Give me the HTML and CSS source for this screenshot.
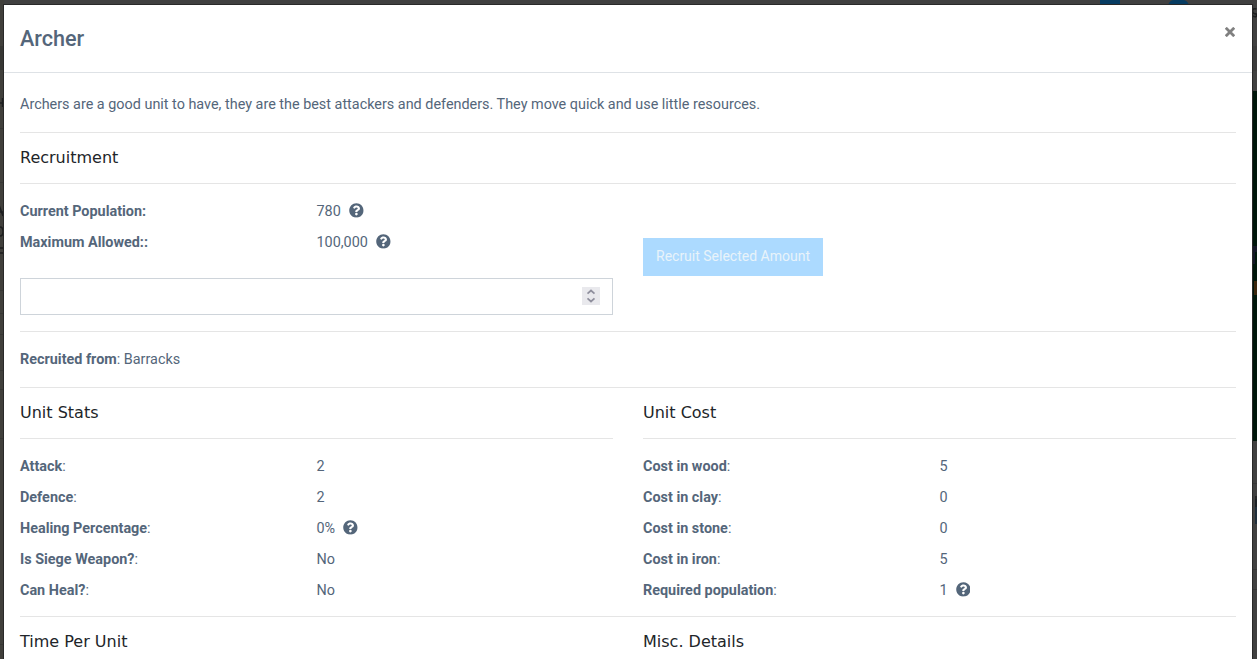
FILE: index.html
```html
<!DOCTYPE html>
<html lang="en">
<head>
<meta charset="utf-8">
<title>Archer</title>
<link rel="stylesheet" href="styles.css">
</head>
<body>
<svg width="0" height="0" class="sprite" aria-hidden="true">
  <symbol id="help" viewBox="0 0 512 512"><path fill="currentColor" d="M504 256c0 136.997-111.043 248-248 248S8 392.997 8 256C8 119.083 119.043 8 256 8s248 111.083 248 248zM262.655 90c-54.497 0-89.255 22.957-116.549 63.758-3.536 5.286-2.353 12.415 2.715 16.258l34.699 26.31c5.205 3.947 12.621 3.008 16.665-2.122 17.864-22.658 30.113-35.797 57.303-35.797 20.429 0 45.698 13.148 45.698 32.958 0 14.976-12.363 22.667-32.534 33.976C247.128 238.528 216 254.941 216 296v4c0 6.627 5.373 12 12 12h56c6.627 0 12-5.373 12-12v-1.333c0-28.462 83.186-29.647 83.186-106.667 0-58.002-60.165-102-116.531-102zM256 338c-25.365 0-46 20.635-46 46 0 25.364 20.635 46 46 46s46-20.636 46-46c0-25.364-20.635-46-46-46z"/></symbol>
</svg>
<div class="backdrop" aria-hidden="true">
  <svg class="backdrop-art" width="1257" height="659">
    <rect width="4" height="659" fill="#403f3b"/>
    <g fill="#373734"><rect y="46" width="4" height="24"/><rect y="128" width="4" height="1"/><rect y="182" width="4" height="1"/><rect y="290" width="4" height="1"/><rect y="313" width="4" height="1"/><rect y="334" width="4" height="1"/><rect y="370" width="4" height="1"/><rect y="389" width="4" height="1"/><rect y="438" width="4" height="1"/><rect y="644" width="4" height="1"/></g>
    <path fill="#073c62" d="M1100 0h20v5h-20zM1168 5q2-5 6-5h9q4 0 6 5z"/>
    <rect x="1252" y="46" width="5" height="25" fill="#3b3b3b"/>
    <rect x="1252" y="91" width="5" height="350" fill="#00170b"/>
    <path fill="#151827" d="M1253 264v-18h4v6h-2v12z"/>
    <path fill="#3b270d" d="M1254 281h3v14h-3z"/>
    <path fill="#1f2e3b" d="M1255 499h2v25h-2z"/>
    <g fill="#363636"><rect x="1252" y="483" width="5" height="1"/><rect x="1252" y="569" width="5" height="1"/><rect x="1252" y="589" width="5" height="1"/></g>
    <g fill="none" stroke="#1c1e1f" stroke-width="1.5"><path d="M1256.5 9q-4-1-4 2t4 3q1 4-4 2"/><path d="M2.5 107v-9M0 103h3M-1 205l4 11M0 212h3M0 227q3 0 3 4.500t-3 4.500M0 248h4M0 253h3M1256 496v11"/></g>
  </svg>
</div>
<main class="modal">
  <header class="modal-header">
    <h1 class="title">Archer</h1>
    <button class="close" aria-label="Close"><svg width="10" height="10" viewBox="0 0 10 10"><path d="M.8.8l8.400 8.400M9.200.8L.8 9.200"/></svg></button>
  </header>
  <div class="modal-body">
    <p class="intro">Archers are a good unit to have, they are the best attackers and defenders. They move quick and use little resources.</p>
    <h2 class="heading">Recruitment</h2>
    <section class="columns recruit">
      <div>
        <dl class="stats">
          <dt><b>Current Population:</b></dt><dd>780<svg class="help"><use href="#help"/></svg></dd>
          <dt><b>Maximum Allowed::</b></dt><dd>100,000<svg class="help"><use href="#help"/></svg></dd>
        </dl>
        <div class="amount"><span class="spinner"><svg width="18" height="18" viewBox="0 0 18 18"><path d="M5.5 6.7L9 3.500l3.500 3.200M5.500 11.300L9 14.500l3.500-3.200"/></svg></span></div>
      </div>
      <div><button class="recruit-button">Recruit Selected Amount</button></div>
    </section>
    <p class="source"><b>Recruited from</b>: Barracks</p>
    <section class="columns details">
      <div>
        <h2 class="heading">Unit Stats</h2>
        <dl class="stats">
          <dt><b>Attack</b>:</dt><dd>2</dd>
          <dt><b>Defence</b>:</dt><dd>2</dd>
          <dt><b>Healing Percentage</b>:</dt><dd>0%<svg class="help"><use href="#help"/></svg></dd>
          <dt><b>Is Siege Weapon?</b>:</dt><dd>No</dd>
          <dt><b>Can Heal?</b>:</dt><dd>No</dd>
        </dl>
      </div>
      <div>
        <h2 class="heading">Unit Cost</h2>
        <dl class="stats">
          <dt><b>Cost in wood</b>:</dt><dd>5</dd>
          <dt><b>Cost in clay</b>:</dt><dd>0</dd>
          <dt><b>Cost in stone</b>:</dt><dd>0</dd>
          <dt><b>Cost in iron</b>:</dt><dd>5</dd>
          <dt><b>Required population</b>:</dt><dd>1<svg class="help"><use href="#help"/></svg></dd>
        </dl>
      </div>
    </section>
    <section class="columns">
      <h2 class="heading last">Time Per Unit</h2>
      <h2 class="heading last">Misc. Details</h2>
    </section>
  </div>
</main>
</body>
</html>
```

FILE: styles.css
```css
* { box-sizing: border-box; }
body {
  margin: 0;
  height: 659px;
  overflow: hidden;
  padding: 4px 4px 0 3px;
  background: #404040;
  color: #54667a;
  font: 14.4px/23px Roboto, sans-serif;
}
h1, h2, p, dl, dd { margin: 0; }
b { font-weight: 700; }
.sprite { position: absolute; }
.backdrop { position: absolute; inset: 0; }
.backdrop-art { display: block; }
.modal {
  position: relative;
  height: 655px;
  background: #fff;
  border: 1px solid #292929;
  border-bottom: 0;
}
.modal-header {
  display: flex;
  justify-content: space-between;
  align-items: flex-start;
  height: 68px;
  padding: 16px;
  border-bottom: 1px solid #dee2e6;
}
.title { font-size: 21.6px; line-height: 35px; font-weight: 500; }
.close { display: flex; border: 0; padding: 0; margin: 5.500px 1px 0 0; background: none; }
.close path { stroke: #808080; stroke-width: 2.8; }
.modal-body { padding: 0 16px; }
.intro { height: 60px; padding-top: 20px; border-bottom: 1px solid #e5e5e5; }
.heading {
  height: 51px;
  padding-top: 14px;
  border-bottom: 1px solid #e5e5e5;
  color: #212529;
  font: 400 16px/22px "DejaVu Sans", sans-serif;
}
.heading.last { height: 42px; border: 0; }
.columns { display: grid; grid-template-columns: 1fr 1fr; column-gap: 30px; }
.recruit { height: 148px; border-bottom: 1px solid #e5e5e5; }
.stats {
  display: grid;
  grid-template-columns: 1fr 1fr;
  grid-auto-rows: 23px;
  row-gap: 8px;
  padding-top: 16px;
}
.help { width: 14.800px; height: 14.800px; margin-left: 8px; vertical-align: -2px; }
.amount {
  display: flex;
  justify-content: flex-end;
  align-items: flex-start;
  height: 37px;
  margin-top: 24px;
  padding: 8px 12px 0;
  border: 1px solid #ced4da;
}
.spinner { display: flex; background: #e9e9ed; }
.spinner path { fill: none; stroke: #8f8f9d; stroke-width: 1.7; }
.recruit-button {
  width: 180px;
  height: 38px;
  margin-top: 54px;
  padding: 0 0 2px;
  border: 0;
  background: #acdaff;
  color: #e8f3fa;
  font: 14.4px/23px Roboto, sans-serif;
  font-size: 14px;
}
.source { height: 56px; padding-top: 16px; border-bottom: 1px solid #e5e5e5; }
.details { height: 229px; border-bottom: 1px solid #e5e5e5; }
```
